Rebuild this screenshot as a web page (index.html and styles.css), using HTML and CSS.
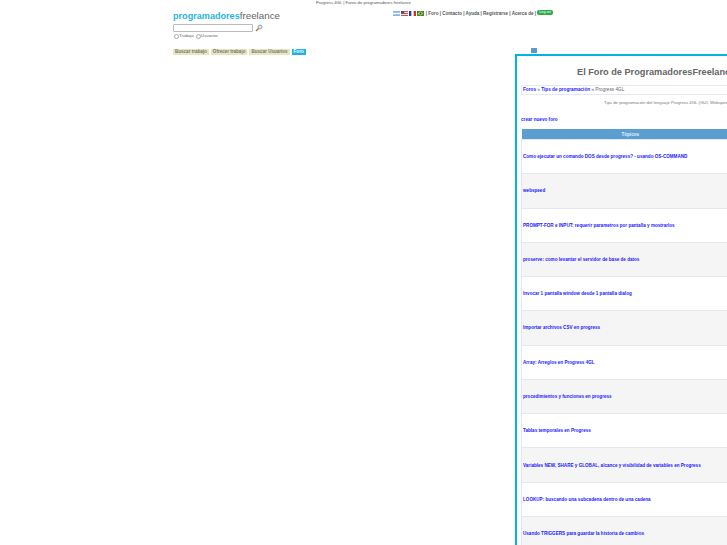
FILE: index.html
```html
<!DOCTYPE html>
<html lang="es">
<head>
    <meta charset="UTF-8">
    <title>Progress 4GL | Foros de programadores freelance</title>
    <link rel="stylesheet" href="styles.css">
</head>
<body>
    <div class="page">
        <div class="page-title">Progress 4GL | Foros de programadores freelance</div>

        <div class="top">
            <div class="brand">
                <div class="logo"><span class="logo-blue">programadores</span><span class="logo-grey">freelance</span></div>
                <form class="search">
                    <div class="search-row">
                        <input type="text" class="search-box">
                        <svg class="lens" width="8" height="8" viewBox="0 0 8 8"><circle cx="5" cy="3" r="2" fill="#dfe8f2" stroke="#8fa3bb" stroke-width="1"/><path d="M3.5 4.5L1 7" stroke="#b5702a" stroke-width="1.4"/></svg>
                    </div>
                    <div class="radios">
                        <label><input type="radio" name="tipo">Trabajo</label>
                        <label><input type="radio" name="tipo">Usuarios</label>
                    </div>
                </form>
            </div>
            <div class="links">
                <svg class="flag" viewBox="0 0 7 5"><rect width="7" height="5" fill="#7fb6e6"/><rect y="1.7" width="7" height="1.6" fill="#fff"/></svg>
                <svg class="flag" viewBox="0 0 7 5"><rect width="7" height="5" fill="#c9505a"/><rect y="1" width="7" height="1" fill="#f0e4e4"/><rect y="3" width="7" height="1" fill="#f0e4e4"/><rect width="3.2" height="2.6" fill="#3f4f8f"/></svg>
                <svg class="flag" viewBox="0 0 7 5"><rect width="7" height="5" fill="#fff"/><rect width="2.3" height="5" fill="#26389a"/><rect x="4.7" width="2.3" height="5" fill="#d62c2c"/></svg>
                <svg class="flag" viewBox="0 0 7 5"><rect width="7" height="5" fill="#2f8f3a"/><path d="M3.5 .6L6.4 2.5 3.5 4.4 .6 2.5z" fill="#e6d52e"/><circle cx="3.5" cy="2.5" r="1" fill="#27407f"/></svg>
                <span class="link-list">| Foro | Contacto | Ayuda | Registrarse | Acerca de |</span>
                <span class="login">Log on</span>
            </div>
        </div>

        <div class="nav-row">
            <nav class="nav">
                <a href="#">Buscar trabajo</a>
                <a href="#">Ofrecer trabajo</a>
                <a href="#">Buscar Usuarios</a>
                <a href="#" class="active">Foro</a>
            </nav>
            <span class="toggle"></span>
        </div>

        <main class="panel">
            <h1>El Foro de ProgramadoresFreelance</h1>
            <div class="crumbs"><a href="#">Foros</a> » <a href="#">Tips de programación</a> » Progress 4GL</div>
            <p class="desc">Tips de programación del lenguaje Progress 4GL (GUI, Webspeed)</p>
            <a href="#" class="new-topic">crear nuevo foro</a>
            <table class="topics">
                <tr><th>Tópicos</th></tr>
                <tr><td><a href="#">Como ejecutar un comando DOS desde progress? - usando OS-COMMAND</a></td></tr>
                <tr><td><a href="#">webspeed</a></td></tr>
                <tr><td><a href="#">PROMPT-FOR e INPUT: requerir parametros por pantalla y mostrarlos</a></td></tr>
                <tr><td><a href="#">proserve: como levantar el servidor de base de datos</a></td></tr>
                <tr><td><a href="#">Invocar 1 pantalla window desde 1 pantalla dialog</a></td></tr>
                <tr><td><a href="#">Importar archivos CSV en progress</a></td></tr>
                <tr><td><a href="#">Array: Arreglos en Progress 4GL</a></td></tr>
                <tr><td><a href="#">procedimientos y funciones en progress</a></td></tr>
                <tr><td><a href="#">Tablas temporales en Progress</a></td></tr>
                <tr><td><a href="#">Variables NEW, SHARE y GLOBAL, alcance y visibilidad de variables en Progress</a></td></tr>
                <tr><td><a href="#">LOOKUP: buscando una subcadena dentro de una cadena</a></td></tr>
                <tr><td><a href="#">Usando TRIGGERS para guardar la historia de cambios</a></td></tr>
            </table>
        </main>
    </div>
</body>
</html>
```
FILE: styles.css
```css
html, body {
    margin: 0;
    height: 545px;
    overflow: hidden;
    background: #fff;
}

body {
    font-family: "Liberation Sans", Arial, sans-serif;
    font-size: 4.7px;
    color: #666;
}

.page {
    width: 727px;
    height: 545px;
    overflow: hidden;
}

.page-title {
    text-align: center;
    font-size: 4.25px;
    line-height: 6px;
    color: #555;
}

.top {
    display: flex;
    justify-content: space-between;
    width: 380px;
    margin-left: 173px;
    padding-top: 3px;
}

.logo {
    font-size: 9.5px;
    line-height: 13px;
    white-space: nowrap;
}

.logo-blue {
    font-size: 9.1px;
    line-height: 1;
    font-weight: bold;
    color: #1fb4e0;
}

.logo-grey {
    font-size: 9.8px;
    line-height: 1;
    color: #666;
}

.search {
    margin: 2px 0 0;
}

.search-row {
    display: flex;
    align-items: flex-start;
    gap: 2px;
}

.search-box {
    width: 80px;
    height: 8px;
    box-sizing: border-box;
    margin: 0;
    padding: 0;
    border: 1px solid #bbb;
    border-radius: 1px;
    background: #fff;
}

.radios {
    display: flex;
    margin-top: 1px;
    font-size: 4.4px;
    line-height: 6px;
}

.radios label {
    display: flex;
    align-items: center;
    margin-right: 1px;
}

.radios input {
    appearance: none;
    width: 5px;
    height: 5px;
    margin: 0 0 0 1px;
    border: 1px solid #aaa;
    border-radius: 50%;
    background: #fff;
}

.links {
    display: flex;
    align-items: center;
    gap: 1px;
    height: 7px;
    margin-top: 1px;
    font-size: 4.55px;
    font-weight: bold;
    color: #555;
}

.flag {
    width: 7px;
    height: 5px;
}

.link-list {
    margin-left: 1px;
}

.login {
    width: 16px;
    height: 5px;
    margin-top: -3px;
    border-radius: 2px;
    background: #2fa84a;
    color: #d8f0dc;
    font-size: 3.5px;
    line-height: 5px;
    text-align: center;
}

.nav-row {
    display: flex;
    justify-content: space-between;
    align-items: flex-start;
    width: 364px;
    height: 5px;
    margin: 10px 0 0 173px;
}

.nav {
    display: flex;
    gap: 2px;
}

.nav a {
    padding: 0 2px;
    line-height: 6px;
    font-size: 4.55px;
    font-weight: bold;
    color: #777;
    background: #e6e6c0;
    text-decoration: none;
}

.nav a.active {
    color: #fff;
    background: #1fb4e0;
}

.toggle {
    width: 6px;
    height: 5px;
    margin-top: -1px;
    background: #5a9acb;
}

.panel {
    box-sizing: border-box;
    width: 420px;
    margin-left: 515px;
    padding: 10px 0 0 4px;
    border: 2px solid #00b5e0;
    background: #fff;
}

h1 {
    margin: 0;
    padding-left: 56px;
    font-size: 9.2px;
    line-height: 12px;
    color: #666;
    white-space: nowrap;
}

.crumbs {
    width: 218px;
    margin-top: 7px;
    padding-left: 1px;
    line-height: 8px;
    border: 1px solid #e4e8f0;
    box-sizing: border-box;
    height: 10px;
    color: #666;
}

a {
    color: #1a1aff;
    font-weight: bold;
    text-decoration: none;
}

.desc {
    margin: 5px 0 0;
    padding-left: 83px;
    font-size: 4.3px;
    line-height: 6px;
    white-space: nowrap;
    color: #777;
}

.new-topic {
    display: block;
    margin: 10px 0 0;
    line-height: 7px;
    font-size: 4.65px;
}

.topics {
    width: 218px;
    margin-top: 6px;
    border-collapse: collapse;
    table-layout: fixed;
    font-size: 4.6px;
}

.topics th {
    height: 10px;
    padding: 0;
    background: #5a9fd0;
    color: #e8f2fa;
    font-weight: bold;
    text-align: center;
}

.topics td {
    height: 33.27px;
    padding: 0 0 0 1px;
    border: 1px solid #e4e8f0;
    border-right: 0;
    white-space: nowrap;
}

.topics tr:nth-child(odd) td {
    background: #f5f5f5;
}
```
